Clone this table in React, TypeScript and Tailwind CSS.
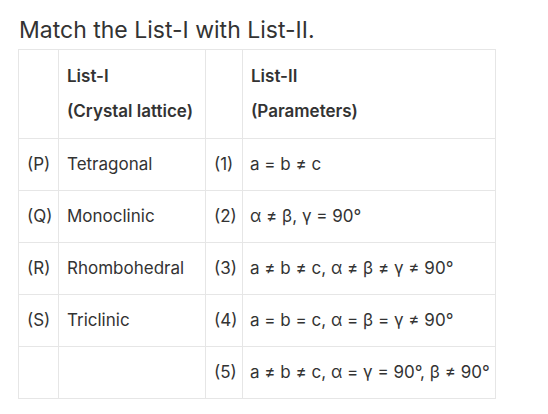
const rows = [
    { l: "(P)", name: "Tetragonal", n: "(1)", p: "a = b ≠ c" },
    { l: "(Q)", name: "Monoclinic", n: "(2)", p: "α ≠ β, γ = 90°" },
    { l: "(R)", name: "Rhombohedral", n: "(3)", p: "a ≠ b ≠ c, α ≠ β ≠ γ ≠ 90°" },
    { l: "(S)", name: "Triclinic", n: "(4)", p: "a = b = c, α = β = γ ≠ 90°" },
    { l: "", name: "", n: "(5)", p: "a ≠ b ≠ c, α = γ = 90°, β ≠ 90°" },
];

export default function App() {
    return (
        <div
            className="w-[548px] h-[414px] bg-white text-[#333] pt-[14px] pl-[19px]"
            style={{ fontFamily: "Inter, sans-serif" }}
        >
            <h1 className="text-[23px] leading-[32px] mb-[3px]">
                Match the List-I with List-II.
            </h1>
            <table className="border-collapse text-[17px] -ml-px table-fixed w-[477px]">
                <colgroup>
                    <col className="w-[40px]" />
                    <col className="w-[147px]" />
                    <col className="w-[37px]" />
                    <col className="w-[253px]" />
                </colgroup>
                <thead>
                    <tr>
                        <th className="border border-[#e6e6e6]"></th>
                        <th className="border border-[#e6e6e6] text-left font-semibold px-[8px] py-[9px] leading-[35px]">
                            <div>List-I</div>
                            <div className="whitespace-nowrap">(Crystal lattice)</div>
                        </th>
                        <th className="border border-[#e6e6e6]"></th>
                        <th className="border border-[#e6e6e6] text-left font-semibold px-[8px] py-[9px] leading-[35px]">
                            <div>List-II</div>
                            <div>(Parameters)</div>
                        </th>
                    </tr>
                </thead>
                <tbody>
                    {rows.map((r, i) => (
                        <tr key={i} className="h-[52px]">
                            <td className="border border-[#e6e6e6] pl-[8px] pr-0 whitespace-nowrap">{r.l}</td>
                            <td className="border border-[#e6e6e6] px-[8px] whitespace-nowrap">{r.name}</td>
                            <td className="border border-[#e6e6e6] pl-[8px] pr-0 whitespace-nowrap">{r.n}</td>
                            <td className="border border-[#e6e6e6] px-[7px] whitespace-nowrap">{r.p}</td>
                        </tr>
                    ))}
                </tbody>
            </table>
        </div>
    );
}
